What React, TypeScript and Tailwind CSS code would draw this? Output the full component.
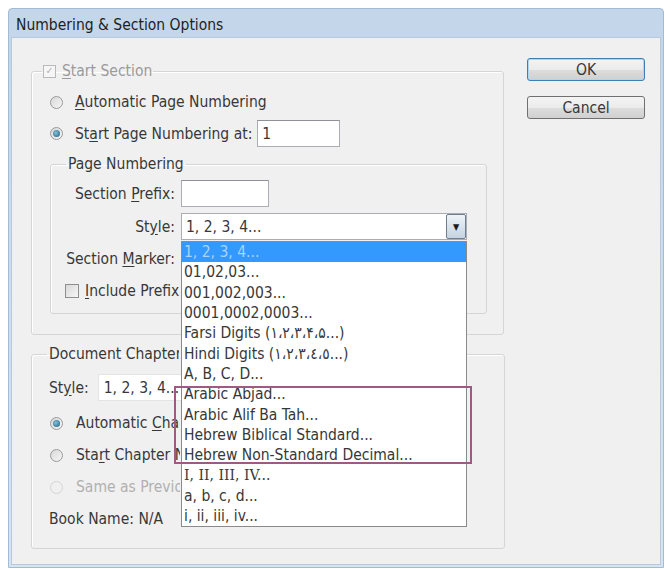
import React from 'react';

const Radio: React.FC<{ checked?: boolean; disabled?: boolean }> = ({ checked, disabled }) => (
  <span
    className={
      'flex h-[13px] w-[13px] shrink-0 items-center justify-center rounded-full border ' +
      (disabled
        ? 'border-[#d4d4d4] bg-[#f0f0f0]'
        : 'border-[#9a9a9a] bg-gradient-to-br from-[#d8d8d8] to-[#f6f6f6]')
    }
  >
    {checked && (
      <span className="h-[7px] w-[7px] rounded-full bg-[radial-gradient(circle_at_40%_40%,#7fc3de,#1d5a7a)]" />
    )}
  </span>
);

const U: React.FC<{ children: React.ReactNode }> = ({ children }) => <span className="underline underline-offset-2">{children}</span>;

const items = [
  '1, 2, 3, 4...',
  '01,02,03...',
  '001,002,003...',
  '0001,0002,0003...',
  'Farsi Digits (۱،۲،۳،۴،۵...)',
  'Hindi Digits (١،٢،٣،٤،٥...)',
  'A, B, C, D...',
  'Arabic Abjad...',
  'Arabic Alif Ba Tah...',
  'Hebrew Biblical Standard...',
  'Hebrew Non-Standard Decimal...',
  'I, II, III, IV...',
  'a, b, c, d...',
  'i, ii, iii, iv...',
];

// open list of the Style select
const Dropdown: React.FC = () => (
  <div className="absolute left-[-1px] top-[27px] z-10 h-[286px] w-[286px] border border-[#8a8a8a] bg-white">
    {items.map((t, i) => (
      <div
        key={t}
        className={
          'flex h-[20.3px] items-center whitespace-nowrap pl-[2px] ' +
          (i === 0 ? 'bg-[#3399ff] text-[#a9d3fb]' : '') +
          (i === 11 ? " font-['DejaVu_Serif',serif] text-[14px]" : '')
        }
      >
        {t}
      </div>
    ))}
    <div className="absolute left-[-8px] top-[144px] h-[78px] w-[298px] border-2 border-[#9c5b85]" />
  </div>
);

const TextBox: React.FC<{ w: string; value?: string }> = ({ w, value }) => (
  <div className={`flex h-[27px] shrink-0 items-center border border-[#abadb3] border-t-[#8e9197] bg-white pl-[4px] ${w}`}>{value}</div>
);

const Button: React.FC<{ label: string; primary?: boolean }> = ({ label, primary }) => (
  <div
    className={
      'flex h-[23px] w-[118px] items-center justify-center rounded-[3px] border bg-[linear-gradient(#f4f4f4_0%,#ebebeb_50%,#dddddd_51%,#d0d0d0_100%)] ' +
      (primary ? 'border-[#3c7fb1] shadow-[inset_0_0_0_1px_#a7d9f5]' : 'border-[#707070]')
    }
  >
    {label}
  </div>
);

const Clip: React.FC<{ w: string; children: React.ReactNode }> = ({ w, children }) => (
  <span className={`block overflow-hidden whitespace-nowrap ${w}`}>{children}</span>
);

export default function App() {
  return (
    <div className="h-[570px] w-[670px] bg-white pl-[8px] pt-[8px] font-['DejaVu_Sans_Condensed','DejaVu_Sans',sans-serif] text-[15.5px] leading-[18px] text-[#383838]">
      <div className="flex h-[560px] w-[656px] flex-col rounded-t-[4px] border border-[#a3bcd6] bg-[linear-gradient(#c3d6ea,#d6e4f2)]">
        <div className="flex h-[28px] shrink-0 items-center pl-[7px] pt-[3px] text-[15.5px] text-[#1e1e1e]">Numbering &amp; Section Options</div>
        <div className="mx-[2px] mb-[2px] flex flex-1 border border-[#b7cadd] bg-[#f0f0f0] pl-[19px] pt-[24px]">
          <div className="flex w-[475px] flex-col">
            {/* Start Section */}
            <fieldset className="w-[473px] rounded-[3px] border border-[#d5d5d5] pb-[20px] shadow-[inset_1px_1px_0_#fff]">
              <legend className="ml-[10px] flex h-[18px] items-center gap-[6px] px-[1px] text-[#9a9a9a]">
                <span className="flex h-[13px] w-[13px] items-center justify-center border border-[#b9b9b9] bg-[#f6f6f6] text-[10px] leading-none text-[#b0b0b0]">✓</span>
                <span>
                  <U>S</U>tart Section
                </span>
              </legend>
              <div className="pl-[18px]">
                <div className="mt-[12px] flex h-[20px] items-center gap-[12px]">
                  <Radio />
                  <span>
                    <U>A</U>utomatic Page Numbering
                  </span>
                </div>
                <div className="mt-[8px] flex h-[27px] items-center">
                  <Radio checked />
                  <span className="ml-[12px] mr-[5px]">
                    St<U>a</U>rt Page Numbering at:
                  </span>
                  <TextBox w="w-[83px]" value="1" />
                </div>

                {/* Page Numbering */}
                <fieldset className="mt-[8px] w-[437px] rounded-[3px] border border-[#d5d5d5] pb-[12px] shadow-[inset_1px_1px_0_#fff]">
                  <legend className="ml-[15px] h-[18px] px-[2px]">Page Numbering</legend>
                  <div className="mt-[7px] flex items-center">
                    <span className="w-[124px] text-right">
                      Section <U>P</U>refix:
                    </span>
                    <span className="ml-[6px]">
                      <TextBox w="w-[88px]" />
                    </span>
                  </div>
                  <div className="mt-[6px] flex items-center">
                    <span className="w-[124px] text-right">
                      St<U>y</U>le:
                    </span>
                    <div className="relative ml-[6px] flex h-[27px] w-[286px] items-center border border-[#abadb3] bg-white pl-[4px]">
                      <span className="flex-1">1, 2, 3, 4...</span>
                      <span className="flex h-[25px] w-[20px] items-center justify-center rounded-[2px] border border-[#6f7f8f] bg-[linear-gradient(#eef3f8,#c5d3e0)] text-[9px] text-[#1a1a1a]">
                        ▼
                      </span>
                      <Dropdown />
                    </div>
                  </div>
                  <div className="mt-[9px] flex h-[20px] items-center">
                    <span className="w-[124px] text-right">
                      Section <U>M</U>arker:
                    </span>
                  </div>
                  <div className="mt-[12px] flex h-[20px] items-center pl-[14px]">
                    <span className="h-[14px] w-[14px] shrink-0 border border-[#8f8f8f] bg-[linear-gradient(135deg,#d9d9d9,#f7f7f7)]" />
                    <span className="ml-[6px]">
                      <Clip w="w-[96px]">
                        <U>I</U>nclude Prefix when Numbering Pages
                      </Clip>
                    </span>
                  </div>
                </fieldset>
              </div>
            </fieldset>

            {/* Document Chapter Numbering */}
            <fieldset className="mt-[10px] w-[474px] rounded-[3px] border border-[#d5d5d5] pb-[13px] shadow-[inset_1px_1px_0_#fff]">
              <legend className="ml-[15px] h-[18px] px-[2px]">
                <Clip w="w-[130px]">Document Chapter Numbering</Clip>
              </legend>
              <div className="pl-[17px]">
                <div className="mt-[11px] flex h-[27px] items-center">
                  <span>
                    St<U>y</U>le:
                  </span>
                  <div className="ml-[9px] flex h-[27px] w-[86px] items-center overflow-hidden whitespace-nowrap border border-r-0 border-[#e4e4e4] bg-white pl-[5px]">
                    1, 2, 3, 4...
                  </div>
                </div>
                <div className="mt-[6px] flex h-[32px] items-center gap-[13px] pl-[1px]">
                  <Radio checked />
                  <Clip w="w-[104px]">
                    Automatic <U>C</U>hapter Numbering
                  </Clip>
                </div>
                <div className="flex h-[32px] items-center gap-[13px] pl-[1px]">
                  <Radio />
                  <Clip w="w-[104px]">
                    Sta<U>r</U>t Chapter Numbering at:
                  </Clip>
                </div>
                <div className="flex h-[32px] items-center gap-[13px] pl-[1px] text-[#b0b0b0]">
                  <Radio disabled />
                  <Clip w="w-[104px]">Same as Previous Document in the Book</Clip>
                </div>
                <div className="flex h-[32px] items-center">Book Name: N/A</div>
              </div>
            </fieldset>
          </div>

          {/* Buttons */}
          <div className="-mt-[4px] ml-[21px] flex flex-col gap-[15px]">
            <Button label="OK" primary />
            <Button label="Cancel" />
          </div>
        </div>
      </div>
    </div>
  );
}
